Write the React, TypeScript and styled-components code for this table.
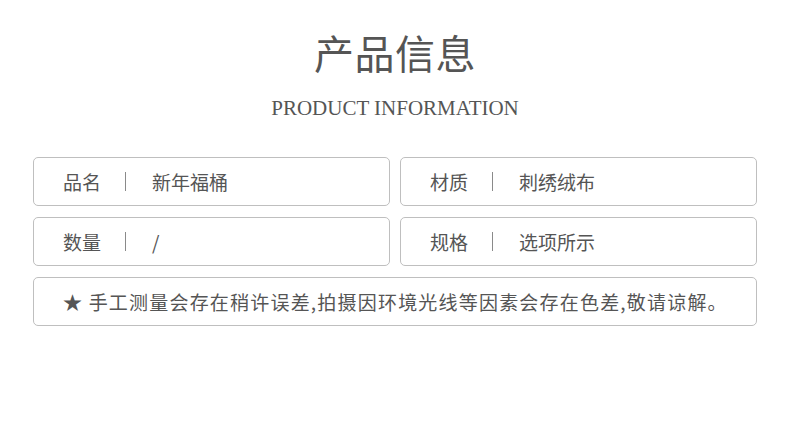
import styled, { createGlobalStyle } from 'styled-components';

const GlobalStyle = createGlobalStyle`
  html, body {
    margin: 0;
    padding: 0;
    background: #fff;
  }
  body {
    font-family: "Noto Sans CJK SC", "Noto Sans", sans-serif;
    color: #555;
  }
`;

const Page = styled.div`
  width: 790px;
  height: 423px;
  display: flex;
  flex-direction: column;
  align-items: center;
  box-sizing: border-box;
  padding-top: 24px;
`;

const Title = styled.h1`
  margin: 0;
  font-size: 40px;
  font-weight: 400;
  line-height: 56px;
  color: #555;
  letter-spacing: 0.5px;
`;

const Subtitle = styled.h2`
  margin: 16px 0 0;
  font-family: "Liberation Serif", "Times New Roman", serif;
  font-size: 21px;
  font-weight: 400;
  line-height: 24px;
  color: #555;
`;

const Grid = styled.div`
  margin-top: 37px;
  width: 724px;
  display: grid;
  grid-template-columns: 1fr 1fr;
  column-gap: 10px;
  row-gap: 11px;
`;

const Box = styled.div<{ $wide?: boolean }>`
  grid-column: ${(p) => (p.$wide ? '1 / span 2' : 'auto')};
  height: 49px;
  box-sizing: border-box;
  border: 1px solid #bfbfbf;
  border-radius: 5px;
  display: flex;
  align-items: center;
  padding-left: 29px;
  font-size: 19px;
  color: #555;
`;

const Label = styled.span`
  width: 38px;
  white-space: nowrap;
`;

const Divider = styled.span`
  width: 1px;
  height: 19px;
  background: #8a8a8a;
  margin: 0 26px 0 24px;
`;

const Value = styled.span`
  white-space: nowrap;
`;

const Note = styled.span`
  white-space: nowrap;
  letter-spacing: 1.2px;
`;

type InfoItem = { label: string; value: string };

const items: InfoItem[] = [
  { label: '品名', value: '新年福桶' },
  { label: '材质', value: '刺绣绒布' },
  { label: '数量', value: '/' },
  { label: '规格', value: '选项所示' },
];

const App = () => {
  return (
    <>
      <GlobalStyle />
      <Page>
        <Title>产品信息</Title>
        <Subtitle>PRODUCT INFORMATION</Subtitle>
        <Grid>
          {items.map((it) => (
            <Box key={it.label}>
              <Label>{it.label}</Label>
              <Divider />
              <Value>{it.value}</Value>
            </Box>
          ))}
          <Box $wide>
            <Note>★ 手工测量会存在稍许误差,拍摄因环境光线等因素会存在色差,敬请谅解。</Note>
          </Box>
        </Grid>
      </Page>
    </>
  );
};

export default App;
